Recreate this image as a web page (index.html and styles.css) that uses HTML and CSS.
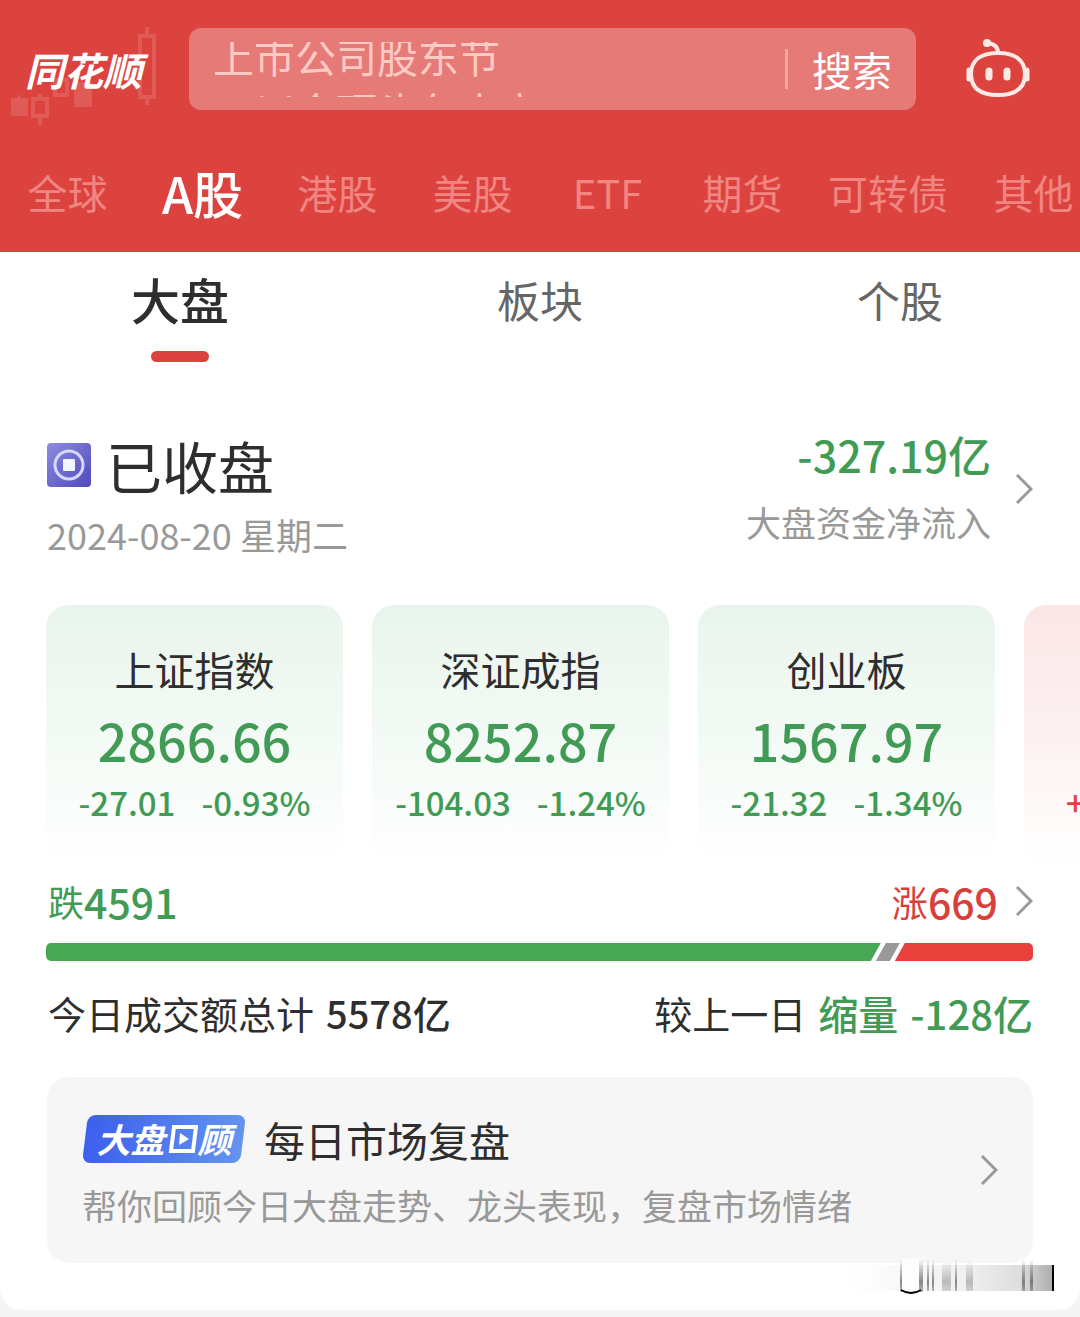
FILE: index.html
```html
<!DOCTYPE html>
<html lang="zh-CN">
<head>
  <meta charset="UTF-8" />
  <meta name="viewport" content="width=device-width, initial-scale=1.0"/>
  <title>同花顺 - A股</title>
  <link rel="stylesheet" href="styles.css">
</head>
<body>

  <header class="header">
    <div class="topbar">
      <a href="#" class="logo">
        <svg class="logo-candles" viewBox="0 0 150 100" aria-hidden="true">
          <path d="M1 73h6l2-4 2 4h7v18H1z M64 57h18v25H64z" fill="#fff" fill-opacity=".13"/>
          <path d="M23 74h14v17H23z M30 74v-5 M30 91v9 M45 55h12v15H45z M130 11h14v61h-14z M137 11V2 M137 72v8" fill="none" stroke="#fff" stroke-opacity=".13" stroke-width="4"/>
        </svg>
        <span class="logo-text">同花顺</span>
      </a>
      <div class="search">
        <a href="#" class="ticker">
          <span>上市公司股东节</span>
          <span>四川金顶头负人立</span>
        </a>
        <button type="button" class="search-btn">搜索</button>
      </div>
      <button type="button" class="robot" aria-label="智能助手">
        <svg width="64" height="60" viewBox="0 0 64 60" fill="none" stroke="#ffe9e6" stroke-width="4">
          <path d="M32 14C14 14 5 22 5 35s8 21 27 21 27-8 27-21S50 14 32 14z"/>
          <path d="M32 14c0-6-3-9-10-10"/>
          <circle cx="21" cy="4" r="4" fill="#ffe9e6" stroke="none"/>
          <path d="M3 31v9M61 31v9" stroke-width="5" stroke-linecap="round"/>
          <path d="M23 32v6M41 32v6" stroke-width="7" stroke-linecap="round"/>
        </svg>
      </button>
    </div>
    <nav class="markets">
      <a href="#">全球</a>
      <a href="#" class="active">A股</a>
      <a href="#">港股</a>
      <a href="#">美股</a>
      <a href="#">ETF</a>
      <a href="#">期货</a>
      <a href="#" class="wide">可转债</a>
      <a href="#">其他</a>
    </nav>
  </header>

  <main class="page">
    <nav class="tabs">
      <a href="#" class="active">大盘</a>
      <a href="#">板块</a>
      <a href="#">个股</a>
    </nav>

    <section class="status">
      <div class="status-left">
        <h1>
          <svg width="44" height="44" viewBox="0 0 44 44" aria-hidden="true">
            <defs>
              <linearGradient id="coin" x1="0" y1="0" x2="1" y2="1">
                <stop offset="0" stop-color="#8b8de0"/>
                <stop offset="1" stop-color="#5048bd"/>
              </linearGradient>
            </defs>
            <rect width="44" height="44" rx="4" fill="url(#coin)"/>
            <circle cx="22" cy="22" r="14" fill="none" stroke="#d5d8fb" stroke-width="3"/>
            <rect x="16" y="16" width="12" height="12" rx="1" fill="#f2f6ff"/>
          </svg>
          已收盘
        </h1>
        <p>2024-08-20 星期二</p>
      </div>
      <a href="#" class="flow">
        <div>
          <strong>-327.19亿</strong>
          <p>大盘资金净流入</p>
        </div>
        <svg class="chevron" viewBox="0 0 18 32" aria-hidden="true"><path d="M2 2l14 14L2 30"/></svg>
      </a>
    </section>

    <section class="indexes">
      <a href="#" class="card">
        <h2>上证指数</h2>
        <strong>2866.66</strong>
        <p><span>-27.01</span><span>-0.93%</span></p>
      </a>
      <a href="#" class="card">
        <h2>深证成指</h2>
        <strong>8252.87</strong>
        <p><span>-104.03</span><span>-1.24%</span></p>
      </a>
      <a href="#" class="card">
        <h2>创业板</h2>
        <strong>1567.97</strong>
        <p><span>-21.32</span><span>-1.34%</span></p>
      </a>
      <a href="#" class="card up" aria-label="更多指数">
        <p><span>+</span></p>
      </a>
    </section>

    <section class="breadth">
      <div class="breadth-row">
        <span class="fall">跌<b>4591</b></span>
        <a href="#" class="rise">涨<b>669</b>
          <svg class="chevron" viewBox="0 0 18 32" aria-hidden="true"><path d="M2 2l14 14L2 30"/></svg>
        </a>
      </div>
      <div class="bar">
        <div class="bar-fall"></div>
        <div class="bar-flat"></div>
        <div class="bar-rise" style="width: 14%"></div>
      </div>
      <div class="turnover">
        <p><span>今日成交额总计</span><b>5578亿</b></p>
        <p><span>较上一日</span><b class="shrink">缩量</b><b class="shrink">-128亿</b></p>
      </div>
    </section>

    <a href="#" class="review">
      <div>
        <h3>
          <span class="badge" aria-label="大盘回顾">
            <span>大盘</span>
            <svg width="30" height="30" viewBox="0 0 30 30" aria-hidden="true">
              <path d="M6 3h22l-3 24H3z" fill="none" stroke="#fff" stroke-width="4"/>
              <path d="M12 9l9 6-10 6z" fill="#fff"/>
            </svg>
            <span>顾</span>
          </span>
          每日市场复盘
        </h3>
        <p>帮你回顾今日大盘走势、龙头表现，复盘市场情绪</p>
      </div>
      <svg class="chevron" viewBox="0 0 18 32" aria-hidden="true"><path d="M2 2l14 14L2 30"/></svg>
    </a>

    <svg class="smear" width="224" height="38" viewBox="0 0 224 38" aria-hidden="true">
      <defs>
        <linearGradient id="haze">
          <stop offset="0" stop-color="#fff" stop-opacity="0"/>
          <stop offset=".3" stop-color="#f8f8f8"/>
          <stop offset=".6" stop-color="#f0f0f0"/>
          <stop offset=".85" stop-color="#ddd"/>
          <stop offset="1" stop-color="#aaa"/>
        </linearGradient>
        <linearGradient id="fade" x1="0" y1="0" x2="0" y2="1">
          <stop offset="0" stop-color="#555" stop-opacity="0"/>
          <stop offset=".7" stop-color="#555" stop-opacity=".7"/>
          <stop offset="1" stop-color="#555" stop-opacity=".4"/>
        </linearGradient>
      </defs>
      <rect y="6" width="222" height="26" fill="url(#haze)"/>
      <rect x="70" y="0" width="19" height="34" fill="#fdfdfd"/>
      <path d="M68 0h2v33h-2z M87 0h4v33h-4z M95 0h2v32h-2z M100 0h2v32h-2z M123 0h2v32h-2z M190 0h3v32h-3z M198 0h3v32h-3z" fill="url(#fade)"/>
      <path d="M110 2h9v30h-9z M134 2h7v30h-7z" fill="url(#fade)" fill-opacity=".5"/>
      <path d="M69 31q10 6 20 0" fill="none" stroke="#000" stroke-width="2"/>
      <path d="M221 6v26" stroke="#000" stroke-width="2"/>
    </svg>
  </main>

</body>
</html>
```

FILE: styles.css
```css
* { box-sizing: border-box; margin: 0; padding: 0; }
body {
  background: #f5f5f5;
  font-family: "Noto Sans CJK SC", sans-serif;
  color: #2e2e2e;
  overflow-x: hidden;
}
a { color: inherit; text-decoration: none; }
button { border: 0; background: none; font-family: inherit; cursor: pointer; }
h1, h2, h3 { font-weight: 400; }
b, strong { font-weight: 500; }

/* header */
.header { background: #dc433f; color: #fff; padding-top: 28px; }
.topbar {
  display: flex;
  align-items: center;
  height: 82px;
  padding: 0 50px 0 25px;
}
.logo { position: relative; flex: 0 0 164px; }
.logo-text {
  position: relative;
  font-size: 39px; line-height: 52px;
  font-weight: 700; font-style: italic;
}
.logo-candles {
  position: absolute;
  left: -15px; top: -18px;
  width: 150px; height: 100px;
}
.search {
  flex: 1;
  display: flex; align-items: center; justify-content: space-between;
  height: 82px;
  padding: 0 24px;
  border-radius: 12px;
  background: #e67a77;
}
.ticker { height: 55px; overflow: hidden; color: #ffc9c4; }
.ticker span {
  display: block;
  font-size: 41px; line-height: 55px;
}
.ticker span:first-child { margin-top: -14px; }
.search-btn {
  padding-left: 24px;
  font-size: 40px; line-height: 40px;
  color: #fff;
  border-left: 3px solid #f3aaa7;
}
.robot { margin-left: 50px; height: 60px; }
.robot svg { display: block; overflow: visible; }

.markets {
  display: flex; align-items: center;
  height: 142px;
  padding-top: 22px;
  overflow: hidden;
}
.markets a {
  flex: 0 0 12.5%;
  text-align: center;
  font-size: 40px; line-height: 60px;
  color: #f08581;
}
.markets .wide { flex-basis: 156px; }
.markets .active { font-size: 50px; font-weight: 500; color: #fff; }

/* page */
.page {
  position: relative;
  background: #fff;
  padding: 15px 0 47px;
  border-radius: 0 0 22px 22px;
}
.tabs { display: flex; }
.tabs a {
  flex: 1;
  text-align: center;
  font-size: 43px; line-height: 64px;
  color: #666;
}
.tabs .active { font-size: 49px; font-weight: 500; color: #2e2e2e; }
.tabs .active::after {
  content: "";
  display: block;
  width: 58px; height: 11px;
  margin: 20px auto 0;
  border-radius: 6px;
  background: #dc433f;
}

.chevron {
  flex: none;
  width: 18px; height: 32px;
  fill: none; stroke: #999; stroke-width: 3;
}

.status {
  display: flex; justify-content: space-between;
  margin: 71px 47px 0;
}
.status h1 {
  display: flex; align-items: center; gap: 15px;
  font-size: 56px; line-height: 64px;
}
.status p { font-size: 35px; line-height: 48px; color: #999; }
.status .status-left p { margin-top: 13px; font-size: 36px; }
.flow { display: flex; align-items: center; gap: 24px; height: 112px; text-align: right; }
.flow strong { display: block; font-size: 43px; line-height: 44px; color: #419b55; }
.flow p { margin-top: 22px; }

.indexes {
  display: flex; gap: 29px;
  margin-top: 47px;
  padding-left: 46px;
  overflow: hidden;
}
.card {
  flex: 0 0 27.5vw;
  padding: 38px 0 41px;
  border-radius: 22px;
  text-align: center;
  color: #419b55;
  background: linear-gradient(#e9f5ec, #f3faf5 50%, #fff);
}
.card h2 { font-size: 40px; line-height: 52px; color: #2e2e2e; }
.card strong { display: block; margin-top: 13px; font-size: 52px; line-height: 64px; }
.card p {
  display: flex; justify-content: center; gap: 26px;
  margin-top: 8px;
  font-size: 33px; line-height: 44px;
  font-weight: 500;
}
.card.up {
  display: flex; align-items: flex-end;
  padding-left: 42px;
  color: #dc433f;
  background: linear-gradient(#fbe6e7, #fdf1f1 50%, #fff);
}

.breadth { margin: 12px 47px 0 46px; }
.breadth-row {
  display: flex; justify-content: space-between;
  height: 48px;
  font-size: 36px; line-height: 48px;
}
.breadth-row b { font-size: 41px; }
.fall { display: flex; align-items: center; padding-left: 2px; color: #419b55; }
.rise { display: flex; align-items: center; color: #d8403c; }
.rise .chevron { margin-left: 17px; }
.bar {
  display: flex;
  height: 18px;
  margin-top: 18px;
  border-radius: 5px;
  overflow: hidden;
}
.bar-fall { flex: 1; background: #48a755; clip-path: polygon(0 0, 100% 0, calc(100% - 10px) 100%, 0 100%); }
.bar-flat { width: 24px; margin: 0 -5px; background: #999; clip-path: polygon(10px 0, 100% 0, 14px 100%, 0 100%); }
.bar-rise { background: #e8403a; clip-path: polygon(10px 0, 100% 0, 100% 100%, 0 100%); }
.turnover {
  display: flex; justify-content: space-between;
  margin-top: 26px;
  padding-left: 2px;
  font-size: 38px; line-height: 52px;
}
.turnover p { display: flex; gap: 12px; }
.turnover .shrink { font-size: 40px; color: #419b55; }

.review {
  display: flex; align-items: center; justify-content: space-between;
  margin: 38px 47px 0;
  padding: 36px 35px;
  border-radius: 22px;
  background: #f6f6f6;
}
.review h3 {
  display: flex; align-items: center; gap: 18px;
  font-size: 41px; line-height: 52px;
}
.review p { margin-top: 18px; font-size: 35px; line-height: 44px; color: #999; }
.badge {
  position: relative;
  display: flex; align-items: center; justify-content: center;
  width: 164px; height: 48px;
  font-size: 34px; line-height: 48px;
  font-weight: 700; font-style: italic;
  color: #fff;
  z-index: 0;
}
.badge svg { margin-left: 3px; }
.badge::before {
  content: "";
  position: absolute;
  inset: 0 3px;
  z-index: -1;
  border-radius: 8px;
  background: linear-gradient(90deg, #3d5fee, #6394ee);
  transform: skewX(-7deg);
}
.smear { position: absolute; right: 24px; bottom: 13px; }
```
